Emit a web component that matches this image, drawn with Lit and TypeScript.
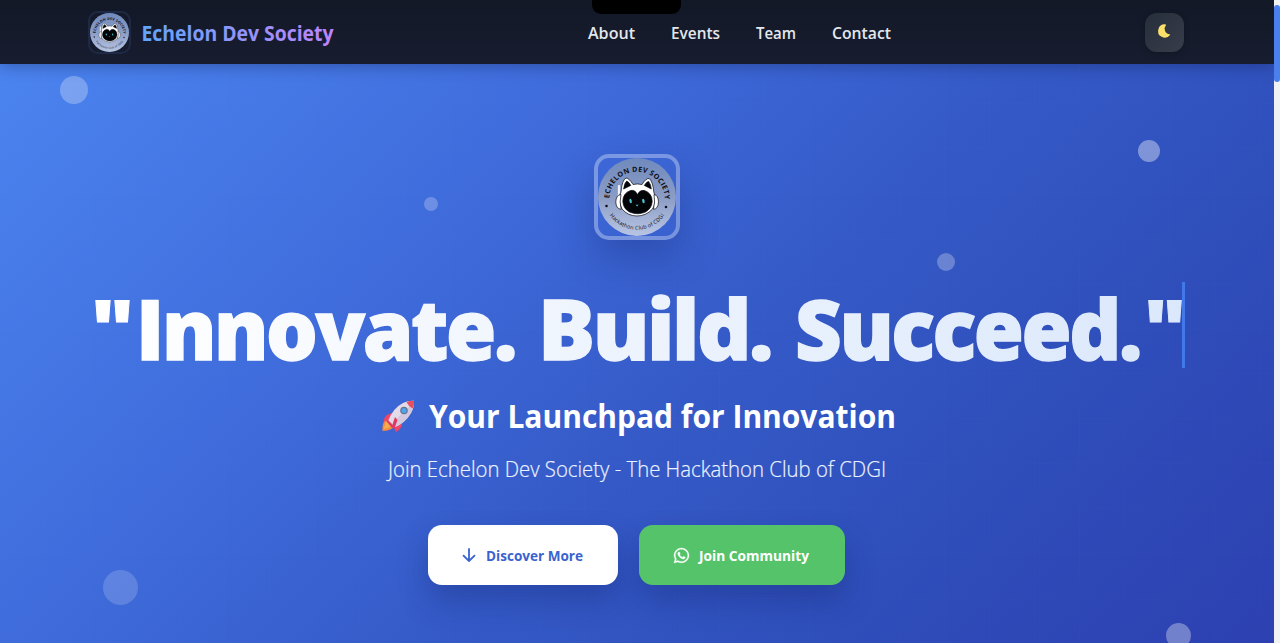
import { LitElement, html, svg, css } from "lit";
import { customElement } from "lit/decorators.js";

/** A run of text drawn at a set advance width on a given baseline. */
const run = (text: string, x: number, y: number, width: number, cls = "") => svg`
  <text class=${cls} x=${x} y=${y} textLength=${width} lengthAdjust="spacingAndGlyphs">${text}</text>`;

@customElement("club-emblem")
class ClubEmblem extends LitElement {
  static styles = css`
    :host { display: block; }
    svg { display: block; width: 100%; height: 100%; overflow: visible; }
    text { font-family: "Open Sans", "Noto Sans", sans-serif; fill: #0b0d18; }
    .name { font-size: 7.1px; font-weight: 700; }
    .motto { font-size: 5.4px; font-weight: 500; }
  `;
  render() {
    return html`<svg viewBox="0 0 78 78" role="img" aria-label="Echelon Dev Society">
      <defs>
        <linearGradient id="disc" x1="0" y1="0" x2="0" y2="1">
          <stop offset="0" stop-color="#6f8abd"></stop>
          <stop offset=".5" stop-color="#8b9cc5"></stop>
          <stop offset="1" stop-color="#b8c5e4"></stop>
        </linearGradient>
        <path id="top" d="M11.2 41.5 A27.8 27.8 0 1 1 66.8 41.5"></path>
        <path id="bottom" d="M10.6 55.5 A33 33 0 0 0 67.4 55.5"></path>
      </defs>
      <circle cx="39" cy="39" r="39" fill="url(#disc)"></circle>
      <text class="name"><textPath href="#top" startOffset="1" textLength="86">ECHELON DEV SOCIETY</textPath></text>
      <text class="motto"><textPath href="#bottom" startOffset="2" textLength="64">Hackathon Club of CDGI</textPath></text>
      <circle cx="8.5" cy="48" r="1.3" fill="#10131f"></circle>
      <circle cx="68" cy="49" r="1.3" fill="#10131f"></circle>
      <g stroke="#0a0c12" stroke-width=".7" stroke-linejoin="round">
        <path d="M20.3 41V27.5h1.4V35" fill="#fff" stroke="#fff"></path>
        <path d="M23 34Q24 22 28 20Q31 20 35 26.5Q39.5 25.4 44 26.5Q48 20 51.2 20.4Q55 24 55.8 34Q59.5 43 54.5 51Q48 58 39 58Q30 58 24 51Q19.5 43 23 34Z" fill="#fff"></path>
        <path d="M25.6 31Q26.6 24.5 28.8 23.1Q31 24 32.8 27.4ZM46.3 27.4Q48.8 23.5 50.6 23.4Q53 26.5 53.3 31Z" fill="#05060b"></path>
        <path d="M39.4 36.5Q37 31.5 32.5 32.5Q25 35 24.8 43.5Q25.5 51 31.5 54Q39.5 57.5 47.5 54Q53.7 50.5 54.2 43.5Q54 35 46.5 32.5Q42 31.5 39.4 36.5Z" fill="#030408"></path>
        <path d="M23 36.5Q18 37 17.8 44Q18 51 23.2 51.3Q21.2 44 23 36.5ZM56 36.5Q60.2 37 60.5 44Q60.2 51 55.4 51.3Q57.5 44 56 36.5Z" fill="#fff"></path>
      </g>
      <ellipse cx="32.6" cy="43" rx="1.2" ry="2.2" fill="#48c9d4" transform="rotate(-12 32.6 43)"></ellipse>
      <ellipse cx="45.4" cy="43" rx="1.2" ry="2.2" fill="#48c9d4" transform="rotate(-12 45.4 43)"></ellipse>
      <path d="M37.7 46.8h2.8L39.1 48.6Z" fill="#48c9d4"></path>
    </svg>`;
  }
}

@customElement("app-root")
class AppRoot extends LitElement {
  static styles = css`
    :host {
      display: grid; grid-template-columns: 1fr 6px; width: 100%; height: 643px;
      overflow: hidden; background: #f1f2f4;
      font-family: "Open Sans", "Noto Sans", sans-serif;
    }
    svg { display: block; overflow: visible; }
    svg text { font-family: "Open Sans", "Noto Sans", sans-serif; }
    .page { position: relative; overflow: hidden; display: flex; flex-direction: column;
      background: linear-gradient(135deg, #4c86f1 0%, #3f6bdb 35%, #355bc8 55%, #2f4fbb 75%, #2d40b1 100%); }
    .page::before { content: ""; position: absolute; inset: 0;
      background:
        repeating-linear-gradient(90deg, transparent 0 44px, rgba(255,255,255,.008) 44px 45px),
        repeating-linear-gradient(0deg, transparent 0 44px, rgba(255,255,255,.008) 44px 45px); }
    header { position: relative; height: 64px; flex: none; display: flex; align-items: center;
      justify-content: space-between; box-sizing: border-box; padding: 2px 90px 0 88px;
      background: linear-gradient(#121826, #171d2f); box-shadow: 0 2px 14px rgba(10,20,60,.35); }
    .notch { position: absolute; left: 592px; top: 0; width: 89px; height: 14px;
      background: #000; border-radius: 0 0 9px 9px; }
    .brand { display: flex; align-items: center; gap: 12px; width: 245px; }
    .badge { box-sizing: border-box; width: 43px; height: 43px; border: 2px solid #1e2a45;
      border-radius: 10px; margin-top: -2px; }
    nav { display: flex; gap: 36px; }
    nav text { font-size: 16px; font-weight: 600; fill: #e3e7ee; }
    .brand text { font-size: 21.5px; font-weight: 700; }
    .theme { width: 39px; height: 39px; border-radius: 12px; padding: 0; border: 0; margin-top: -2px;
      display: grid; place-items: center; background: linear-gradient(135deg, #272e3b, #373e4a);
      box-shadow: 0 2px 6px rgba(0,0,0,.2); }
    .theme svg { margin-bottom: 3px; }
    main { position: relative; display: flex; flex-direction: column; align-items: center;
      padding-top: 90px; width: 1273px; }
    .logo { box-sizing: border-box; width: 86px; height: 86px; border: 4px solid rgba(255,255,255,.32);
      border-radius: 15px; box-shadow: 0 18px 36px rgba(20,35,110,.3); }
    .logo club-emblem, .badge club-emblem { width: 100%; height: 100%; }
    h1, h2, p { margin: 0; }
    h1 { margin-top: 42px; width: 1097px; height: 86px; border-right: 3px solid #4279ea; box-sizing: border-box; }
    h1 text { font-size: 84px; font-weight: 800; fill: url(#fade); stroke: url(#fade); stroke-width: 1.4px; letter-spacing: -2.5px; }
    h1 text.mark { letter-spacing: 0; stroke-width: 1px; }
    h2 { margin-top: 28px; width: 514px; height: 42px; }
    h2 text { font-size: 31.5px; font-weight: 700; fill: #fff; }
    p { margin-top: 16px; width: 499px; height: 32px; }
    p text { font-size: 21.3px; font-weight: 300; fill: #ecf2ff; stroke: #ecf2ff; stroke-width: .2px; }
    .actions { display: flex; gap: 21px; margin-top: 39px; }
    .btn { display: flex; align-items: center; gap: 10px; height: 60px; border-radius: 14px;
      box-sizing: border-box; padding: 0 35px 0 34px; box-shadow: 0 16px 30px rgba(20,35,110,.32); }
    .btn text { font-size: 14.3px; font-weight: 700; }
    .light { background: #fff; color: #3a63d0; width: 190px; }
    .green { background: #55c369; color: #fff; width: 206px; padding-left: 35px; }
    .btn text { fill: currentColor; }
    .bubble { position: absolute; border-radius: 50%; background: rgba(255,255,255,.27); }
    .b1 { left: 60px; top: 76px; width: 28px; height: 28px; }
    .b2 { left: 1138px; top: 140px; width: 22px; height: 22px; background: rgba(255,255,255,.38); }
    .b3 { left: 424px; top: 197px; width: 14px; height: 14px; background: rgba(255,255,255,.24); }
    .b4 { left: 937px; top: 253px; width: 18px; height: 18px; background: rgba(255,255,255,.27); }
    .b5 { left: 103px; top: 570px; width: 35px; height: 35px; background: rgba(255,255,255,.17); }
    .b6 { left: 1166px; top: 623px; width: 25px; height: 25px; background: rgba(255,255,255,.33); }
    .scroll { background: #f1f2f4; padding-top: 5px; }
    .thumb { height: 77px; border-radius: 3px; background: #4a80ee; }
  `;

  private links: [string, number][] = [["About", 47], ["Events", 49], ["Team", 40], ["Contact", 59]];
  private bubbles = ["b1", "b2", "b3", "b4", "b5", "b6"];

  render() {
    return html`
      <div class="page">
        ${this.bubbles.map((b) => html`<span class="bubble ${b}"></span>`)}
        <header>
          <div class="brand">
            <div class="badge"><club-emblem></club-emblem></div>
            <svg width="190" height="30">
              <defs><linearGradient id="brand"><stop stop-color="#60a5fa"></stop><stop offset="1" stop-color="#c084fc"></stop></linearGradient></defs>
              <g fill="url(#brand)">${run("Echelon Dev Society", -1.5, 23, 192)}</g>
            </svg>
          </div>
          <nav>${this.links.map(([t, w]) => html`<svg width=${w} height="24">${run(t, 0, 17.5, w)}</svg>`)}</nav>
          <button class="theme" aria-label="Toggle theme">
            <svg width="13" height="14" viewBox="0 0 13 14"><path d="M7.7.4A6.6 6.6 0 1 0 12 10.9Q12.3 10.2 11.6 10.2A5.4 5.4 0 0 1 7.9 1.3Q8.5.6 7.7.4Z" fill="#fae06a"></path></svg>
          </button>
          <div class="notch"></div>
        </header>
        <main>
          <div class="logo"><club-emblem></club-emblem></div>
          <h1><svg width="1094" height="86">
            <defs><linearGradient id="fade" gradientUnits="userSpaceOnUse" x1="0" y1="0" x2="1094" y2="86"><stop stop-color="#fff"></stop><stop offset="1" stop-color="#dbe8fb"></stop></linearGradient></defs>
            ${run('"', 3, 78, 43, "mark")}
            ${run("Innovate.", 48, 78, 379)}
            ${run("Build.", 450, 78, 233)}
            ${run("Succeed.", 707, 78, 345)}
            ${run('"', 1056, 78, 42, "mark")}
          </svg></h1>
          <h2><svg width="514" height="42">
            <g transform="translate(2 4)">
              <path d="M3 20Q0 24 .5 31Q8 31 12 27L9 21Z" fill="#f58a45"></path>
              <path d="M4 21L1.5 29Q8 28 10 25Z" fill="#f5ad4c"></path>
              <path d="M10 13Q3 14 1.5 21L9 22ZM20 23Q20 29 14 32L11 25Z" fill="#ee4668"></path>
              <path d="M6 21Q11 8 21 3Q26 .5 32 .8Q32.5 7 29 13Q23 23 13 27Z" fill="#e4dbe9"></path>
              <path d="M13 27Q23 23 29 13Q31.5 8 32 2L9 24Z" fill="#d3c9df"></path>
              <path d="M24.5 2Q28 .6 32 .8Q32.4 5 31 8.5Q27 7 24.5 2Z" fill="#e94e5d"></path>
              <path d="M6 20L13 27L10 28L5 22ZM13 17L15.5 20L12 30Q9 27 13 17Z" fill="#e03a62"></path>
              <circle cx="22" cy="10.5" r="3.8" fill="#6d7190"></circle><circle cx="22" cy="10.5" r="2.6" fill="#4ba5ef"></circle>
            </g>
            ${run("Your Launchpad for Innovation", 49, 32, 467)}
          </svg></h2>
          <p><svg width="499" height="32">${run("Join Echelon Dev Society - The Hackathon Club of CDGI", 1, 23, 498)}</svg></p>
          <div class="actions">
            <div class="btn light">
              <svg width="14" height="14" viewBox="0 0 14 14"><path d="M7 1v12M1.5 7.6L7 13l5.5-5.4" fill="none" stroke="currentColor" stroke-width="1.8" stroke-linecap="round" stroke-linejoin="round"></path></svg>
              <svg width="97" height="20">${run("Discover More", 0, 15.5, 97)}</svg>
            </div>
            <div class="btn green">
              <svg width="15" height="15" viewBox="0 30 448 452" preserveAspectRatio="none"><path fill="currentColor" stroke="currentColor" stroke-width="10" d="M380.9 97.1C339 55.1 283.2 32 223.9 32c-122.4 0-222 99.6-222 222 0 39.1 10.2 77.3 29.6 111L0 480l117.7-30.9c32.4 17.7 68.9 27 106.1 27h.1c122.3 0 224.1-99.6 224.1-222 0-59.3-25.2-115-67.1-157zm-157 341.6c-33.2 0-65.7-8.9-94-25.7l-6.7-4-69.8 18.3L72 359.2l-4.4-7c-18.5-29.4-28.2-63.3-28.2-98.2 0-101.7 82.8-184.5 184.6-184.5 49.3 0 95.6 19.2 130.4 54.1 34.8 34.9 56.2 81.2 56.1 130.5 0 101.8-84.9 184.6-186.6 184.6zm101.2-138.2c-5.5-2.8-32.8-16.2-37.9-18-5.1-1.9-8.8-2.8-12.5 2.8-3.7 5.6-14.3 18-17.6 21.8-3.2 3.7-6.5 4.2-12 1.4-32.6-16.3-54-29.1-75.5-66-5.7-9.8 5.7-9.1 16.3-30.3 1.8-3.7.9-6.9-.5-9.7-1.4-2.8-12.5-30.1-17.1-41.2-4.5-10.8-9.1-9.3-12.5-9.5-3.2-.2-6.9-.2-10.6-.2-3.7 0-9.7 1.4-14.8 6.9-5.1 5.6-19.4 19-19.4 46.3 0 27.3 19.9 53.7 22.6 57.4 2.8 3.7 39.1 59.7 94.8 83.8 35.2 15.2 49 16.5 66.6 13.9 10.7-1.6 32.8-13.4 37.4-26.4 4.6-13 4.6-24.1 3.2-26.4-1.3-2.5-5-3.9-10.5-6.6z"></path></svg>
              <svg width="110" height="20">${run("Join Community", 0, 15.5, 110)}</svg>
            </div>
          </div>
        </main>
      </div>
      <div class="scroll"><div class="thumb"></div></div>`;
  }
}
